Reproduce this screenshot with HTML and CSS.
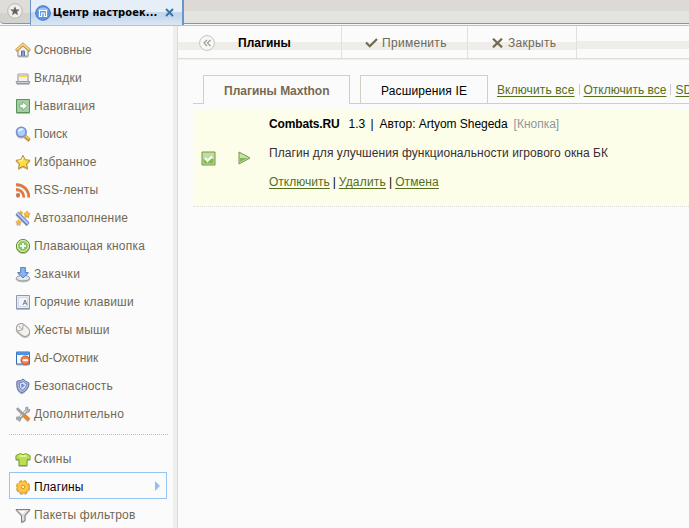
FILE: index.html
```html
<!DOCTYPE html>
<html lang="ru">
<head>
<meta charset="utf-8">
<title>Центр настроек</title>
<link rel="stylesheet" href="styles.css">
</head>
<body>
<header class="tabstrip">
  <div class="star-slot"><svg width="16" height="16" viewBox="0 0 16 16"><circle cx="8" cy="8" r="7.3" fill="#eeeeeb" stroke="#b8b7b2"/><path d="M8 3.2l1.3 3.2 3.5.2-2.7 2.2.9 3.4-3-1.9-3 1.9.9-3.4-2.7-2.2 3.5-.2z" fill="#65635d"/></svg></div>
  <div class="browser-tab">
    <svg width="16" height="16" viewBox="0 0 16 16"><circle cx="8" cy="8" r="7.3" fill="#5b96df" stroke="#427bc7"/><path d="M2.5 5.5C4 1.5 12 1.5 13.5 5.5z" fill="#99c3f3"/><path d="M4.5 11.5v-6h7v6H9.3V8H6.7v3.5z" fill="#5b96df" stroke="#fff" stroke-width="1.2"/></svg>
    <b class="browser-title">Центр настроек...</b>
    <svg class="tab-close" width="9" height="9" viewBox="0 0 9 9"><path d="M1 1l7 7M8 1L1 8" stroke="#3d74a6" stroke-width="2"/></svg>
  </div>
  <div class="strip-rest"></div>
</header>
<div class="workspace">
<nav class="sidebar">
  <a class="item"><svg viewBox="0 0 16 16"><path d="M3 7v7h10V7L8 3z" fill="#f2f3f7" stroke="#8f96aa"/><path d="M6.5 14V9h3v5" fill="#8ca0c4" stroke="#69738e"/><path d="M1.3 8.5L8 2.4l6.7 6.1" fill="none" stroke="#b88a3d" stroke-width="3.2"/><path d="M1.5 8L8 2.2 14.5 8" fill="none" stroke="#f6d681" stroke-width="1.7"/></svg><span class="loose-1">Основные</span></a>
  <a class="item"><svg viewBox="0 0 16 16"><path d="M3 4h10v8H3z" fill="#f2f1e8" stroke="#9ba1b0"/><path d="M4 5h8v2H4z" fill="#fad23e"/><path d="M1 11.5h14l-1 2H2z" fill="#c6cddd" stroke="#858fa7" stroke-width=".8"/></svg><span class="loose-3">Вкладки</span></a>
  <a class="item"><svg viewBox="0 0 16 16"><path d="M1.5 1.5h13v13h-13z" fill="#a4cda1" stroke="#579458"/><path d="M4 6.3h3.6V3.8L12.5 8l-4.9 4.2V9.7H4l1.2-1.7z" fill="#fff" stroke="#67a06a" stroke-width=".7"/></svg><span class="loose-2">Навигация</span></a>
  <a class="item"><svg viewBox="0 0 16 16"><path d="M10 10l4.5 4" stroke="#cf8926" stroke-width="3.2"/><path d="M10 9.5l4 3.6" stroke="#ffd05a" stroke-width="1.3"/><circle cx="6.3" cy="6" r="4.8" fill="#a9ceff" stroke="#788ec4" stroke-width="1.5"/><path d="M3.5 5.5Q5 2.5 8 3.5" stroke="#e4f2ff" stroke-width="1.8" fill="none"/></svg><span>Поиск</span></a>
  <a class="item"><svg viewBox="0 0 16 16"><path d="M8 1.3l2.1 4.4 5 .6-3.6 3.5 1 4.8L8 12.2l-4.5 2.4 1-4.8L.9 6.3l5-.6z" fill="#ffdc43" stroke="#bd892b"/><path d="M8 3.5L6.8 6.7l-3.3.5" fill="none" stroke="#fff6ae" stroke-width="1.2"/></svg><span class="loose-2">Избранное</span></a>
  <a class="item"><svg viewBox="0 0 16 16"><g fill="none" stroke="#e47736" stroke-width="2.5"><path d="M1 2.5A12 12 0 0 1 13.7 15M1 7.2A7.8 7.8 0 0 1 8.9 15"/></g><circle cx="3" cy="13" r="2" fill="#df6c2c"/></svg><span class="loose-1">RSS-ленты</span></a>
  <a class="item"><svg viewBox="0 0 16 16"><path d="M2 3l11 11" stroke="#6276b3" stroke-width="4"/><path d="M2 2.7L12.8 13.5" stroke="#bbcdf4" stroke-width="2"/><path d="M12 1l1 2 2 .4-1.5 1.5.3 2L12 6l-2 .9.4-2L9 3.4l2-.4zM3.6 9.5l.8 1.7 1.8.3-1.3 1.3.3 1.8-1.6-.9-1.6.9.3-1.8L1 11.5l1.8-.3zM5.5.8l.6 1.3 1.5.2-1.1 1 .3 1.4-1.3-.7z" fill="#ffc62c" stroke="#eba41d" stroke-width=".8"/></svg><span class="loose-2">Автозаполнение</span></a>
  <a class="item"><svg viewBox="0 0 16 16"><circle cx="8" cy="8" r="6.6" fill="#96ca61" stroke="#579335"/><circle cx="8" cy="8" r="5.5" fill="none" stroke="#e1f1cf"/><path d="M6.7 4.5h2.6v2.2h2.2v2.6H9.3v2.2H6.7V9.3H4.5V6.7h2.2z" fill="#fff" stroke="#67a340" stroke-width=".6"/></svg><span class="loose-2">Плавающая кнопка</span></a>
  <a class="item"><svg viewBox="0 0 16 16"><ellipse cx="8" cy="12.2" rx="6.8" ry="2.7" fill="#e6e7eb" stroke="#9499a6"/><path d="M5.7 1.5h4.6v5h3L8 12 2.7 6.5h3z" fill="#88b5f0" stroke="#5683c5"/></svg><span class="loose-3">Закачки</span></a>
  <a class="item"><svg viewBox="0 0 16 16"><path d="M1.5 1.5h13v13h-13z" fill="#e7ebf2" stroke="#8d98ad"/><path d="M3.5 3.5h9v9h-9z" fill="#f2f4f8" stroke="#d2dae6"/><path d="M8 11l2-5 2 5M8.8 9.3h2.5" fill="none" stroke="#71809f"/></svg><span class="loose-2">Горячие клавиши</span></a>
  <a class="item"><svg viewBox="0 0 16 16"><rect x="3.2" y=".7" width="9.6" height="14.6" rx="4.8" transform="rotate(-48 8 8)" fill="#f2f1ed" stroke="#a09f99"/><path d="M2.5 9l5-1.2.8-5.3M3.8 4l3.7 3.8" fill="none" stroke="#aaa79f"/></svg><span class="loose-1">Жесты мыши</span></a>
  <a class="item"><svg viewBox="0 0 16 16"><path d="M1.5 2h13v12h-13z" fill="#f4f9fe" stroke="#336eb4"/><path d="M1.5 2h13v3h-13z" fill="#4d91e1"/><circle cx="10.3" cy="10.2" r="4.3" fill="#ef8050" stroke="#c34e2e"/><path d="M7.7 9.2h5.2v2H7.7z" fill="#fff"/></svg><span>Ad-Охотник</span></a>
  <a class="item"><svg viewBox="0 0 16 16"><path d="M2 3q5 0 6-2 2 2 6 4Q14 11 7 15 .7 13 2 3z" fill="#a8b9e0" stroke="#66749f"/><path d="M4 4.8q3 0 4.5-1.2 1.5 2 3.5 2.5-.7 4.2-5 6.3-3-2-3-7.6z" fill="#dce4fa" stroke="#6e82bd"/><path d="M6 5.5l4 1.5-3.5 3.5z" fill="#7389c7"/></svg><span class="loose-2">Безопасность</span></a>
  <a class="item"><svg viewBox="0 0 16 16"><path d="M13 3L4 12.5" stroke="#8d8f91" stroke-width="3"/><path d="M13 3L4 12" stroke="#ececec" stroke-width="1.3"/><path d="M10 2.2q1-1.4 3-1l-1 2.3 2.8-.3q.1 2.5-2.3 3M1.3 11.2q2-1.2 4 .7 1 2.3-1.2 3l-.4-2-2 .2z" fill="#b5b7b8" stroke="#858889" stroke-width=".6"/><path d="M2 2l7 7" stroke="#9b9da0" stroke-width="2.4"/><path d="M9 9l5 4.8" stroke="#ef8420" stroke-width="3.8"/></svg><span class="loose-3">Дополнительно</span></a>
  <div class="separator"></div>
  <a class="item"><svg viewBox="0 0 16 16"><path d="M5.5 2.5Q8 5 10.5 2.5L15 4.5v4h-3v6H4v-6H1v-4z" fill="#b9df51" stroke="#77a72d"/><path d="M4.5 5h7" stroke="#e8f6a3" stroke-width="1.5"/></svg><span class="loose-4">Скины</span></a>
  <a class="item selected"><svg viewBox="0 0 16 16"><circle cx="8" cy="8" r="5.8" fill="none" stroke="#e7a32d" stroke-width="2.5" stroke-dasharray="3 1.56"/><circle cx="8" cy="8" r="5.5" fill="#ffca43" stroke="#f0af35"/><circle cx="8" cy="8" r="1.8" fill="#fff0a5" stroke="#d6942d"/></svg><span class="loose-1">Плагины</span><i class="pointer"></i></a>
  <a class="item"><svg viewBox="0 0 16 16"><path d="M1 2.5h14L10 8.3v5.2L6.5 15V8.3z" fill="#dedede" stroke="#7e7e7e"/><path d="M3.5 4h7L8 7z" fill="#fff"/></svg><span class="loose-2">Пакеты фильтров</span></a>
</nav>
<div class="gutter"></div>
<main class="content">
  <div class="toolbar">
    <div class="cell heading"><svg width="16" height="16" viewBox="0 0 16 16"><circle cx="8" cy="8" r="7.4" fill="#f7f7f5" stroke="#c5c3ba"/><path d="M8 5L5 8l3 3M11.5 5l-3 3 3 3" fill="none" stroke="#a29f91" stroke-width="1.3"/></svg><b>Плагины</b></div>
    <div class="cell apply"><svg width="13" height="10" viewBox="0 0 13 10"><path d="M1 4.5l3.8 3.8L12 1" fill="none" stroke="#706a4b" stroke-width="2.2"/></svg><span class="loose-3">Применить</span></div>
    <div class="cell close"><svg width="11" height="10" viewBox="0 0 11 10"><path d="M1 .7l9 8.6M10 .7L1 9.3" stroke="#706a4b" stroke-width="2.2"/></svg><span class="loose-3">Закрыть</span></div>
    <div class="cell filler"></div>
  </div>
  <div class="page-tabs">
    <div class="edge"></div><div class="page-tab active"><b>Плагины Maxthon</b></div><div class="edge"></div><div class="page-tab ie"><span class="loose-1">Расширения IE</span></div>
    <div class="bulk"><a class="loose-1">Включить все</a><i></i><a>Отключить все</a><i></i><a>SD</a></div>
  </div>
  <section class="plugin">
    <svg class="check" width="15" height="15" viewBox="0 0 15 15"><path d="M1 1h13v13H1z" fill="#c0dda0" stroke="#6e9848"/><path d="M2.5 8h10v4.5h-10z" fill="#84b84d"/><path d="M4 7l2.5 3L11 5.5" fill="none" stroke="#fff" stroke-width="2"/></svg>
    <svg class="play" width="13" height="14" viewBox="0 0 13 14"><path d="M1 1l11 6-11 6z" fill="#c7e2a7" stroke="#70994b"/><path d="M2 7h8l-8 4z" fill="#85b65b"/></svg>
    <div class="details">
      <p class="meta"><b class="name">Combats.RU</b><span class="version">1.3</span><span class="bar">|</span><span class="author">Автор: Artyom Shegeda</span><span class="kind">[Кнопка]</span></p>
      <p class="description">Плагин для улучшения функциональности игрового окна БК</p>
      <p class="actions"><a>Отключить</a><span>|</span><a class="loose-2">Удалить</a><span>|</span><a class="loose-1">Отмена</a></p>
    </div>
  </section>
</main>
</div>
</body>
</html>
```
FILE: styles.css
```css
* { box-sizing: border-box; }
body { margin: 0; width: 689px; height: 528px; overflow: hidden; background: #fbfbfb; font: 12px/14px "Liberation Sans", Arial, sans-serif; color: #000; }
svg { flex: none; display: block; }
p { margin: 0; }
span, b, a { white-space: nowrap; }
.loose-1 { letter-spacing: .12px; }
.loose-2 { letter-spacing: .2px; }
.loose-3 { letter-spacing: .3px; }
.loose-4 { letter-spacing: .4px; }
.tabstrip { height: 26px; display: flex; border-bottom: 1px solid #adc2e0; background: #f4f7fb; }
.star-slot { width: 30px; height: 24px; padding: 3px 0 0 7px; background: linear-gradient(#deddd8 0 13px, #d4d2cc 13px); border-bottom: 1px solid #7398ca; border-radius: 0 0 0 4px; }
.browser-tab { width: 154px; height: 25px; padding: 0 8px 0 4px; display: flex; align-items: center; background: linear-gradient(#e6eef7 0 12px, #c5d7ec 12px 16px, #dce7f4); border: 1px solid #6b94ca; border-width: 0 2px 0 1px; }
.browser-title { margin-left: 2px; font: bold 11px/14px "DejaVu Sans Condensed", "DejaVu Sans", sans-serif; letter-spacing: .1px; width: 106px; }
.tab-close { margin-left: 7px; }
.strip-rest { flex: 1; height: 24px; background: linear-gradient(#dddad5 0 11px, #e3e3df 11px); border-bottom: 1px solid #7398ca; }
.workspace { display: flex; height: 502px; }
.sidebar { width: 173px; padding: 10px 5px 0 9px; color: #716955; }
.item { display: flex; align-items: center; height: 28px; padding-left: 6px; }
.item svg { width: 16px; height: 16px; margin-right: 3px; filter: drop-shadow(.5px 1px .5px #bbb); }
.item.selected { width: 158px; height: 27px; margin: -1px 0 2px; padding-left: 5px; padding-top: 2px; border: 1px solid #96c4f5; color: #100010; }
.pointer { margin: -2px 6px 0 auto; border: 5px solid transparent; border-left-color: #91bff0; border-right: 0; }
.separator { height: 1px; margin: 6px 0 10px; background: repeating-linear-gradient(90deg, #c5beb0 0 1px, transparent 1px 2px); }
.gutter { width: 5px; background: #eeeeea; border-right: 1px solid #dcdcd5; }
.content { width: 511px; }
.toolbar { display: flex; height: 33px; border-bottom: 1px solid #deddd5; box-shadow: 0 1px #f0efeb; }
.cell { display: flex; align-items: center; height: 32px; padding-top: 1px; background: linear-gradient(transparent 16px, #eeede9 16px 24px, transparent 24px); border-right: 1px solid #e2e1db; color: #706957; }
.heading { width: 164px; padding-left: 21px; color: #000; }
.heading b { margin-left: 23px; }
.apply { width: 126px; padding-left: 23px; }
.apply span { margin-left: 4px; }
.close { width: 109px; padding-left: 24px; }
.close span { margin-left: 5px; }
.filler { flex: 1; border: 0; background-position: 0 -1px; }
.page-tabs { display: flex; height: 29px; margin: 16px 0 5px 15px; align-items: flex-end; }
.edge { flex: none; width: 10px; height: 1px; background: #cfcfc5; }
.page-tabs .edge + .page-tab + .edge { background: none; }
.page-tab { flex: none; height: 29px; padding-top: 8px; border: 1px solid #cfcfc5; }
.page-tabs .edge + .page-tab + .edge { background: #cfcfc5; }
.active { width: 147px; border-bottom: 0; padding-left: 20px; color: #766a52; }
.ie { width: 128px; padding-left: 20px; }
.bulk { flex: 1; min-width: 0; height: 29px; padding: 8px 0 0 9px; border-bottom: 1px solid #cfcfc5; display: flex; }
a { text-decoration: none; }
.bulk a, .actions a { color: #526f1a; text-decoration: underline; text-underline-offset: 2px; }
.bulk i { width: 1px; height: 11px; margin: 1px 4px; background: #cacad4; flex: none; }
.plugin { display: flex; height: 98px; margin-left: 15px; background: #fdfeea; border-bottom: 1px dotted #d9d9d9; }
.check { margin: 42px 0 0 8px; }
.play { margin: 42px 0 0 22px; }
.details { margin: 8px 0 0 18px; }
.meta { display: flex; }
.name { letter-spacing: -.15px; }
.version { margin-left: 9px; width: 22px; }
.bar { width: 9px; }
.author { letter-spacing: -.04px; }
.kind { margin-left: 6px; color: #939599; }
.description { margin-top: 15px; color: #382e34; letter-spacing: .06px; }
.actions { display: flex; margin-top: 15px; }
.actions span { margin: 0 3px; }
```
